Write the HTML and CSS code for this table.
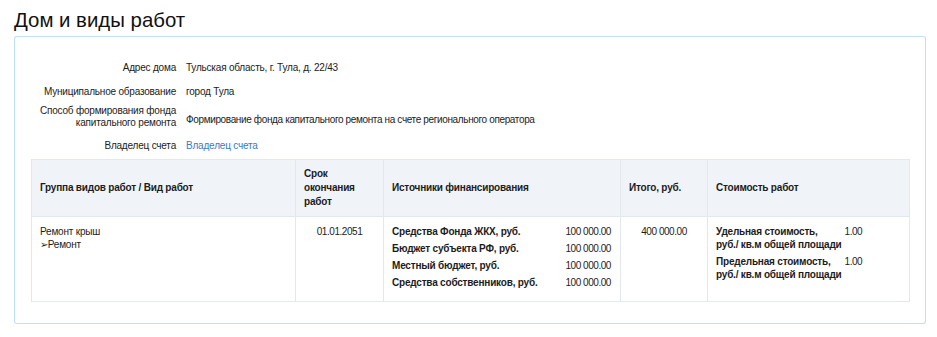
FILE: index.html
```html
<!DOCTYPE html>
<html lang="ru">
<head>
<meta charset="utf-8">
<title>Дом и виды работ</title>
<link rel="stylesheet" href="styles.css">
</head>
<body>
<h1 class="title">Дом и виды работ</h1>
<div class="panel">
  <div class="info">
    <div class="info-label">Адрес дома</div>
    <div class="info-value">Тульская область, г. Тула, д. 22/43</div>
    <div class="info-label">Муниципальное образование</div>
    <div class="info-value">город Тула</div>
    <div class="info-label">Способ формирования фонда<br>капитального ремонта</div>
    <div class="info-value info-value--long">Формирование фонда капитального ремонта на счете регионального оператора</div>
    <div class="info-label info-cell--last">Владелец счета</div>
    <div class="info-value info-cell--last"><a class="link" href="#">Владелец счета</a></div>
  </div>
  <table class="works">
    <colgroup>
      <col class="c1"><col class="c2"><col class="c3"><col class="c4"><col class="c5">
    </colgroup>
    <thead>
      <tr>
        <th>Группа видов работ / Вид работ</th>
        <th>Срок<br>окончания<br>работ</th>
        <th>Источники финансирования</th>
        <th>Итого, руб.</th>
        <th>Стоимость работ</th>
      </tr>
    </thead>
    <tbody>
      <tr>
        <td class="group">Ремонт крыш<br>&#10146;Ремонт</td>
        <td class="center num">01.01.2051</td>
        <td>
          <table class="sources">
            <tr><td class="s-label">Средства Фонда ЖКХ, руб.</td><td class="s-val num">100 000.00</td></tr>
            <tr><td class="s-label">Бюджет субъекта РФ, руб.</td><td class="s-val num">100 000.00</td></tr>
            <tr><td class="s-label">Местный бюджет, руб.</td><td class="s-val num">100 000.00</td></tr>
            <tr><td class="s-label">Средства собственников, руб.</td><td class="s-val num">100 000.00</td></tr>
          </table>
        </td>
        <td class="center num">400 000.00</td>
        <td>
          <table class="costs">
            <tr><td class="c-label">Удельная стоимость,<br>руб./ кв.м общей площади</td><td class="c-val num">1.00</td></tr>
            <tr><td class="c-label">Предельная стоимость,<br>руб./ кв.м общей площади</td><td class="c-val num">1.00</td></tr>
          </table>
        </td>
      </tr>
    </tbody>
  </table>
</div>
</body>
</html>
```
FILE: styles.css
```css
html, body {
  margin: 0;
  padding: 0;
  background: #fff;
}
body {
  font-family: "Liberation Sans", Arial, sans-serif;
  color: #222;
  padding: 0 11px 0 14px;
}
.title {
  margin: 0;
  padding-top: 8px;
  height: 28px;
  font-size: 20.4px;
  font-weight: normal;
  line-height: 24px;
  color: #111;
}
.panel {
  border: 1px solid #c8dcec;
  border-top-color: #bfe0fb;
  border-left-color: #bfe0fb;
  border-radius: 3px;
  padding: 19px 15px 0 16px;
  height: 288px;
  box-sizing: border-box;
}
.info {
  display: grid;
  grid-template-columns: 145px 1fr;
  grid-template-rows: 24px 24px 26px 29px;
  column-gap: 10px;
  font-size: 10px;
  line-height: 12px;
  letter-spacing: -0.2px;
  align-items: center;
}
.info-label {
  text-align: right;
  color: #222;
}
.info-value {
  color: #222;
}
.info-value--long {
  padding-top: 6px;
  letter-spacing: -0.36px;
}
.info-cell--last {
  padding-top: 3px;
}
.link {
  color: #3b7bbf;
  text-decoration: none;
}
.works {
  width: 100%;
  border-collapse: collapse;
  font-size: 10px;
  line-height: 14px;
  letter-spacing: -0.2px;
  color: #1c1c1c;
}
.c1 { width: 264px; }
.c2 { width: 88px; }
.c3 { width: 237px; }
.c4 { width: 87px; }
.works th {
  background: #f0f4f8;
  border: 1px solid #e2e8ee;
  text-align: left;
  font-weight: bold;
  padding: 7px 8px;
  height: 40px;
  vertical-align: middle;
}
.works td {
  border: 1px solid #e2e8ee;
  vertical-align: top;
  padding: 8px 8px;
  height: 67px;
}
.works td.group {
  line-height: 13px;
}
.works td.center {
  text-align: center;
}
.num {
  letter-spacing: -0.45px;
}
.sources {
  border-collapse: collapse;
  width: 100%;
}
.costs {
  border-collapse: collapse;
}
.works .sources td,
.works .costs td {
  border: none;
  height: auto;
  padding: 0;
}
.works .sources td {
  padding-bottom: 3px;
  line-height: 14px;
}
.s-label {
  font-weight: bold;
}
.works .sources td.s-val {
  text-align: right;
  padding-right: 1px;
}
.works .costs td {
  line-height: 13px;
  padding-bottom: 4px;
  vertical-align: top;
}
.c-label {
  font-weight: bold;
}
.works .costs td.c-val {
  padding-left: 3px;
}
```
